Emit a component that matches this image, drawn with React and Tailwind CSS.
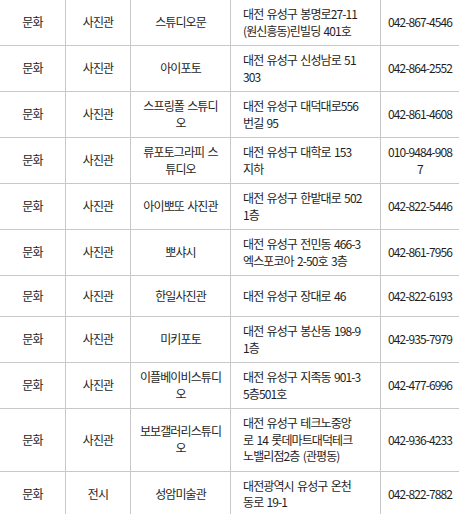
const rows = [
  ['문화', '사진관', '스튜디오문', '대전 유성구 봉명로27-11\n(원신흥동)린빌딩 401호', '042-867-4546'],
  ['문화', '사진관', '아이포토', '대전 유성구 신성남로 51\n303', '042-864-2552'],
  ['문화', '사진관', '스프링폴 스튜디\n오', '대전 유성구 대덕대로556\n번길 95', '042-861-4608'],
  ['문화', '사진관', '류포토그라피 스\n튜디오', '대전 유성구 대학로 153\n지하', '010-9484-908\n7'],
  ['문화', '사진관', '아이뽀또 사진관', '대전 유성구 한밭대로 502\n1층', '042-822-5446'],
  ['문화', '사진관', '뽀샤시', '대전 유성구 전민동 466-3\n엑스포코아 2-50호 3층', '042-861-7956'],
  ['문화', '사진관', '한일사진관', '대전 유성구 장대로 46', '042-822-6193'],
  ['문화', '사진관', '미키포토', '대전 유성구 봉산동 198-9\n1층', '042-935-7979'],
  ['문화', '사진관', '이플베이비스튜디\n오', '대전 유성구 지족동 901-3\n5층501호', '042-477-6996'],
  ['문화', '사진관', '보보갤러리스튜디\n오', '대전 유성구 테크노중앙\n로 14 롯데마트대덕테크\n노밸리점2층 (관평동)', '042-936-4233'],
  ['문화', '전시', '성암미술관', '대전광역시 유성구 온천\n동로 19-1', '042-822-7882'],
]

function Lines({ text }) {
  return text.split('\n').map((line, i) => (
    <div key={i} className="whitespace-nowrap">{line}</div>
  ))
}

export default function App() {
  return (
    <div
      className="w-[459px] bg-white text-[#1e1e1e] text-[12px] leading-[16.7px] tracking-[-0.9px] [word-spacing:1.5px]"
      style={{ fontFamily: '"Noto Sans CJK KR", "Noto Sans", sans-serif' }}
    >
      {rows.map((r, i) => (
        <div key={i} className="flex min-h-[41px] border-b border-[#c8c8c8]">
          <div className="w-[66px] shrink-0 border-r border-[#c8c8c8] flex flex-col items-center justify-center text-center py-[5.8px]">
            <Lines text={r[0]} />
          </div>
          <div className="w-[65px] shrink-0 border-r border-[#c8c8c8] flex flex-col items-center justify-center text-center py-[5.8px]">
            <Lines text={r[1]} />
          </div>
          <div className="w-[100px] shrink-0 border-r border-[#c8c8c8] flex flex-col items-center justify-center text-center py-[5.8px]">
            <Lines text={r[2]} />
          </div>
          <div className="w-[150px] shrink-0 border-r border-[#c8c8c8] flex flex-col justify-center pl-[12px] py-[5.8px]">
            <Lines text={r[3]} />
          </div>
          <div className="flex-1 flex flex-col items-center justify-center text-center py-[5.8px]">
            <Lines text={r[4]} />
          </div>
        </div>
      ))}
    </div>
  )
}
